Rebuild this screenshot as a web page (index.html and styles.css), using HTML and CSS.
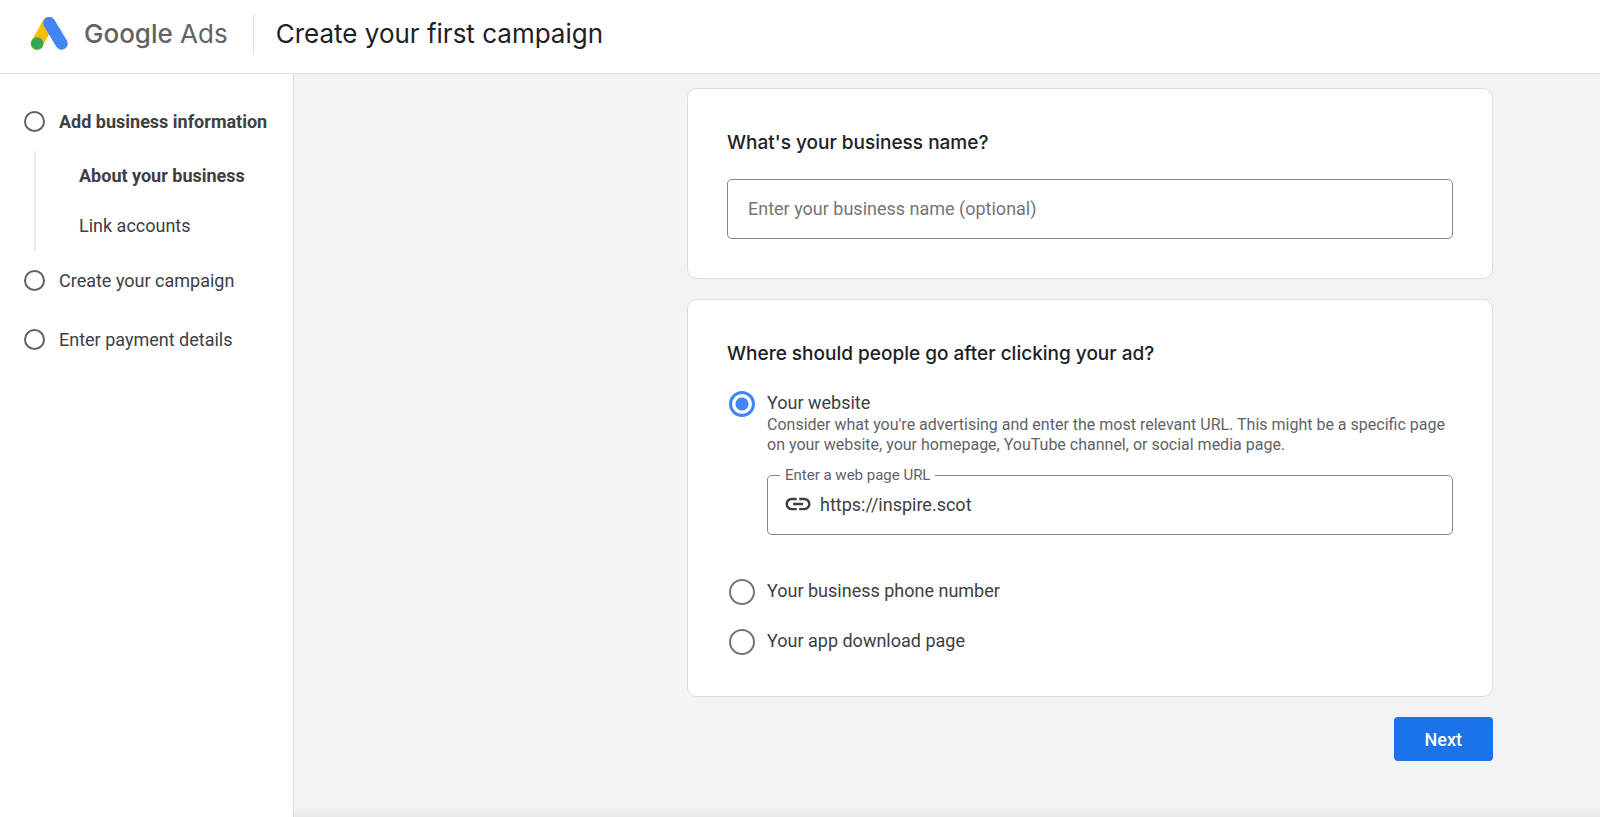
FILE: index.html
```html
<!DOCTYPE html>
<html lang="en">
<head>
<meta charset="UTF-8">
<meta name="viewport" content="width=device-width, initial-scale=1.0">
<title>Create your first campaign - Google Ads</title>
<link rel="stylesheet" href="styles.css">
</head>
<body>
<header class="header">
  <a class="brand" href="#">
    <svg class="logo" width="38" height="36" viewBox="0 0 38 36" aria-hidden="true">
      <path d="M18.5 7 L6.7 28" stroke="#fbbc04" stroke-width="12" stroke-linecap="round"/>
      <path d="M19.2 7 L31.6 27.6" stroke="#4285f4" stroke-width="12.2" stroke-linecap="round"/>
      <circle cx="7.2" cy="27.5" r="6.2" fill="#34a853"/>
    </svg>
    <span class="brand-name"><span class="brand-google">Google</span> Ads</span>
  </a>
  <h1 class="page-title">Create your first campaign</h1>
</header>

<div class="layout">
  <nav class="sidebar">
    <ul class="steps">
      <li>
        <a class="step current" href="#"><span class="step-dot"></span>Add business information</a>
        <ul class="substeps">
          <li><a class="substep current" href="#">About your business</a></li>
          <li><a class="substep" href="#">Link accounts</a></li>
        </ul>
      </li>
      <li><a class="step" href="#"><span class="step-dot"></span>Create your campaign</a></li>
      <li><a class="step" href="#"><span class="step-dot"></span>Enter payment details</a></li>
    </ul>
  </nav>

  <main class="main">
    <form class="form">
      <section class="card">
        <h2 class="card-title"><label for="business-name">What's your business name?</label></h2>
        <input class="text-field" id="business-name" type="text" placeholder="Enter your business name (optional)">
      </section>

      <section class="card">
        <h2 class="card-title">Where should people go after clicking your ad?</h2>
        <div class="options">
          <div class="option">
            <input class="radio" type="radio" name="destination" id="dest-website" checked>
            <div class="option-body">
              <label class="option-label" for="dest-website">Your website</label>
              <p class="option-hint">Consider what you're advertising and enter the most relevant URL. This might be a specific page on your website, your homepage, YouTube channel, or social media page.</p>
              <div class="url-field">
                <label class="url-label" for="url">Enter a web page URL</label>
                <svg class="link-icon" width="30" height="30" viewBox="0 0 24 24" aria-hidden="true">
                  <path fill="#3c4043" d="M3.9 12c0-1.71 1.39-3.1 3.1-3.1h4V7H7c-2.76 0-5 2.24-5 5s2.24 5 5 5h4v-1.9H7c-1.71 0-3.1-1.39-3.1-3.1zM8 13h8v-2H8v2zm9-6h-4v1.9h4c1.71 0 3.1 1.39 3.1 3.1s-1.39 3.1-3.1 3.1h-4V17h4c2.76 0 5-2.24 5-5s-2.24-5-5-5z"/>
                </svg>
                <input class="url-input" id="url" type="text" value="https://inspire.scot">
              </div>
            </div>
          </div>
          <div class="option">
            <input class="radio" type="radio" name="destination" id="dest-phone">
            <label class="option-label" for="dest-phone">Your business phone number</label>
          </div>
          <div class="option">
            <input class="radio" type="radio" name="destination" id="dest-app">
            <label class="option-label" for="dest-app">Your app download page</label>
          </div>
        </div>
      </section>

      <button class="next-btn" type="button">Next</button>
    </form>
  </main>
</div>
</body>
</html>
```
FILE: styles.css
```css
* {
  box-sizing: border-box;
}

body {
  display: flex;
  flex-direction: column;
  min-height: 100vh;
  margin: 0;
  font-family: Roboto, Arial, sans-serif;
  font-size: 18px;
  color: #3c4043;
  background-color: #fff;
}

h1, h2, p, ul {
  margin: 0;
  padding: 0;
}

ul {
  list-style: none;
}

a {
  color: inherit;
  text-decoration: none;
}

input, button {
  font-family: inherit;
  font-size: inherit;
}

/* header */
.header {
  display: flex;
  align-items: center;
  height: 74px;
  padding: 0 30px 6px;
  border-bottom: 1px solid #e0e0e0;
}

.brand {
  display: flex;
  align-items: center;
  gap: 16px;
  padding-right: 25px;
}

.logo {
  fill: none;
}

.brand-name {
  font-family: Inter, sans-serif;
  font-size: 26px;
  line-height: 36px;
  color: #5f6368;
}

.brand-google {
  font-weight: 500;
}

.page-title {
  padding-left: 22px;
  border-left: 1px solid #dadce0;
  font-family: Inter, sans-serif;
  font-size: 26px;
  font-weight: 400;
  line-height: 40px;
  color: #202124;
}

/* steps */
.layout {
  display: flex;
  flex: 1;
}

.sidebar {
  flex: none;
  width: 294px;
  padding-top: 18px;
  border-right: 1px solid #dadce0;
}

.step {
  display: flex;
  align-items: center;
  gap: 14px;
  height: 59px;
  padding-left: 24px;
}

.step-dot {
  width: 21px;
  height: 21px;
  border: 2px solid #5f6368;
  border-radius: 50%;
}

.substeps {
  margin-left: 34px;
  border-left: 2px solid #e8eaed;
}

.substep {
  display: block;
  padding-left: 43px;
  line-height: 50px;
}

.current {
  font-weight: 700;
}

/* form */
.main {
  display: flex;
  flex: 1;
  justify-content: flex-end;
  padding: 14px 107px 56px;
  background: linear-gradient(to top, #e8e9eb, #f1f3f4 10px);
}

.form {
  display: flex;
  flex-direction: column;
  gap: 20px;
  width: 100%;
  max-width: 806px;
}

.card {
  padding: 39px;
  border: 1px solid #dadce0;
  border-radius: 10px;
  background-color: #fff;
}

.card-title {
  font-family: Inter, sans-serif;
  font-size: 19px;
  font-weight: 500;
  line-height: 30px;
  color: #202124;
}

.text-field {
  width: 100%;
  height: 60px;
  margin-top: 21px;
  padding: 0 20px 2px;
  border: 1px solid #80868b;
  border-radius: 5px;
}

.text-field::placeholder {
  color: #757575;
}

.options {
  display: flex;
  flex-direction: column;
  gap: 24px;
  padding: 22px 0 2px;
}

.option {
  display: flex;
  align-items: flex-start;
  gap: 12px;
}

.option:first-child {
  margin-bottom: 20px;
}

.radio {
  appearance: none;
  flex: none;
  width: 26px;
  height: 26px;
  margin: 0 0 0 2px;
  border: 2px solid #757575;
  border-radius: 50%;
}

.radio:checked {
  border: 3px solid #4285f4;
  background: radial-gradient(circle, #4285f4 6px, #fff 7px);
}

.option-body {
  flex: 1;
}

.option-label {
  line-height: 24px;
}

.option-hint {
  font-size: 16px;
  line-height: 20px;
  color: #5f6368;
}

.url-field {
  position: relative;
  display: flex;
  align-items: center;
  gap: 7px;
  height: 60px;
  margin-top: 20px;
  padding: 0 15px 2px;
  border: 1px solid #80868b;
  border-radius: 5px;
}

.url-label {
  position: absolute;
  top: -11px;
  left: 12px;
  padding: 0 5px;
  font-size: 15px;
  line-height: 20px;
  color: #5f6368;
  background-color: #fff;
}

.url-input {
  flex: 1;
  padding: 0;
  border: none;
  outline: none;
  color: #3c4043;
}

.next-btn {
  align-self: flex-end;
  height: 44px;
  padding: 0 31px;
  border: none;
  border-radius: 4px;
  font-weight: 500;
  color: #fff;
  background-color: #1a73e8;
}
```
